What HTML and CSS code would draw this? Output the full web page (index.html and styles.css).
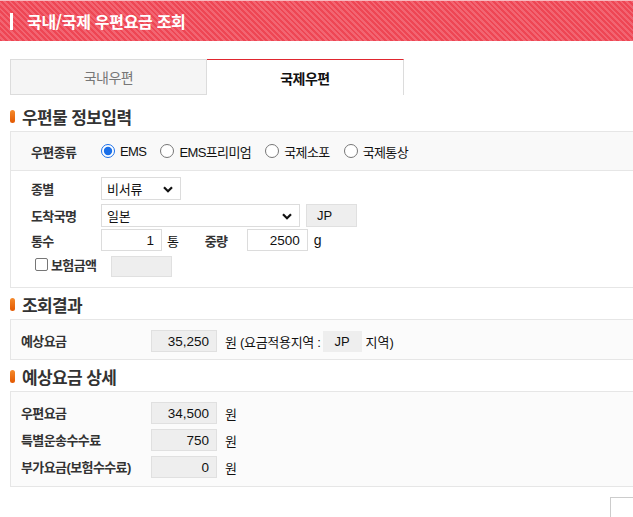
FILE: index.html
```html
<!DOCTYPE html>
<html lang="ko">
<head>
<meta charset="utf-8">
<title>국내/국제 우편요금 조회</title>
<link rel="stylesheet" href="styles.css">
</head>
<body>
<header class="page-header">
  <span class="bar"></span>
  <h1 class="page-title">국내/국제 우편요금 조회</h1>
</header>
<main class="content">
  <div class="tabs">
    <div class="tab">국내우편</div>
    <div class="tab active">국제우편</div>
  </div>

  <h2 class="sec-title first">우편물 정보입력</h2>
  <div class="box box-form">
    <div class="type-row">
      <span class="lbl type-lbl">우편종류</span>
      <label class="radio"><input type="radio" name="t" checked>EMS</label>
      <label class="radio"><input type="radio" name="t">EMS프리미엄</label>
      <label class="radio"><input type="radio" name="t">국제소포</label>
      <label class="radio"><input type="radio" name="t">국제통상</label>
    </div>
    <div class="fields">
      <div class="frow r1">
        <span class="lbl flbl">종별</span>
        <div class="sel sel-sm">
          <span class="sel-text">비서류</span>
          <svg class="chev" width="10" height="7" viewBox="0 0 10 7"><path d="M1 1.2 L5 5.2 L9 1.2" fill="none" stroke="#111" stroke-width="2.2"/></svg>
        </div>
      </div>
      <div class="frow r2">
        <span class="lbl flbl">도착국명</span>
        <div class="sel sel-lg">
          <span class="sel-text">일본</span>
          <svg class="chev" width="10" height="7" viewBox="0 0 10 7"><path d="M1 1.2 L5 5.2 L9 1.2" fill="none" stroke="#111" stroke-width="2.2"/></svg>
        </div>
        <span class="code-box">JP</span>
      </div>
      <div class="frow r3">
        <span class="lbl flbl">통수</span>
        <span class="inp inp-num">1</span>
        <span class="unit">통</span>
        <span class="lbl wlbl">중량</span>
        <span class="inp inp-num">2500</span>
        <span class="unit unit-g">g</span>
      </div>
      <div class="frow r4">
        <label class="chk"><span class="chkbox"></span><span class="lbl">보험금액</span></label>
        <span class="inp inp-dis"></span>
      </div>
    </div>
  </div>

  <h2 class="sec-title">조회결과</h2>
  <div class="box box-res">
    <div class="rrow">
      <span class="lbl rlbl">예상요금</span>
      <span class="inp inp-ro">35,250</span>
      <span class="unit">원 (요금적용지역 :</span>
      <span class="zone">JP</span>
      <span class="unit2">지역)</span>
    </div>
  </div>

  <h2 class="sec-title">예상요금 상세</h2>
  <div class="box box-res box-detail">
    <div class="rrow">
      <span class="lbl rlbl">우편요금</span>
      <span class="inp inp-ro">34,500</span>
      <span class="unit">원</span>
    </div>
    <div class="rrow">
      <span class="lbl rlbl">특별운송수수료</span>
      <span class="inp inp-ro">750</span>
      <span class="unit">원</span>
    </div>
    <div class="rrow">
      <span class="lbl rlbl">부가요금(보험수수료)</span>
      <span class="inp inp-ro">0</span>
      <span class="unit">원</span>
    </div>
  </div>
</main>
<div class="corner-btn"></div>
</body>
</html>
```
FILE: styles.css
```css
html, body {
  margin: 0;
  padding: 0;
  background: #fff;
  overflow: hidden;
}
body {
  width: 633px;
  height: 517px;
  position: relative;
  font-family: "Liberation Sans", "Noto Sans CJK KR", sans-serif;
  font-size: 13px;
  color: #222;
}
.page-header {
  height: 40px;
  border-top: 1px solid #f7b9bf;
  background: repeating-linear-gradient(45deg, #ee4654 0 2px, #f26572 2px 4px);
  display: flex;
  align-items: center;
}
.bar {
  width: 3px;
  height: 17px;
  background: #fff;
  margin-left: 10px;
  margin-right: 14px;
}
.page-title {
  margin: 0;
  font-size: 16px;
  font-weight: bold;
  color: #fff;
  letter-spacing: -0.3px;
  font-family: "Noto Sans CJK KR", sans-serif;
}
.content {
  width: 700px;
  padding-left: 10px;
}
.tabs {
  display: flex;
  margin-top: 18px;
  height: 36px;
}
.tab {
  width: 197px;
  box-sizing: border-box;
  display: flex;
  align-items: center;
  justify-content: center;
  font-family: "Noto Sans CJK KR", sans-serif;
  font-size: 14px;
  letter-spacing: -0.5px;
}
.tab:first-child {
  background: #f5f5f5;
  border: 1px solid #dcdcdc;
  color: #777;
}
.tab.active {
  background: #fff;
  border-top: 1px solid #e0262f;
  border-right: 1px solid #dcdcdc;
  color: #111;
  font-weight: bold;
}
.sec-title {
  margin: 4px 0 3px;
  height: 24px;
  display: flex;
  align-items: center;
  font-size: 17px;
  font-weight: bold;
  color: #333;
  font-family: "Noto Sans CJK KR", sans-serif;
  letter-spacing: -0.6px;
}
.sec-title.first {
  margin-top: 9px;
}
.sec-title::before {
  content: "";
  width: 5px;
  height: 13px;
  border-radius: 3px;
  background: linear-gradient(#f58a2c, #e35800);
  margin-right: 7px;
  margin-top: 1px;
}
.box {
  border: 1px solid #e6e6e6;
  box-sizing: border-box;
}
.lbl {
  font-weight: bold;
  color: #333;
  letter-spacing: -0.6px;
}
.box-form .type-row {
  height: 38px;
  background: #f9f9f9;
  border-bottom: 1px solid #e6e6e6;
  display: flex;
  align-items: center;
  padding-left: 20px;
}
.type-lbl {
  width: 70px;
}
.radio {
  display: flex;
  align-items: center;
  margin-right: 14px;
  color: #111;
  letter-spacing: -0.6px;
  font-size: 13px;
}
.radio input {
  margin: 0 5px 0 0;
  width: 14px;
  height: 14px;
  accent-color: #1a6fe8;
}
.fields {
  padding: 6px 0 10px 20px;
}
.frow {
  display: flex;
  align-items: center;
}
.r1 { height: 23px; }
.r2 { height: 23px; margin-top: 4px; }
.r3 { height: 22px; margin-top: 2px; }
.r4 { height: 22px; margin-top: 4px; }
.flbl {
  width: 70px;
}
.sel {
  position: relative;
  height: 23px;
  box-sizing: border-box;
  border: 1px solid #dcdcdc;
  background: #fff;
  display: flex;
  align-items: center;
  padding-left: 5px;
}
.sel-text {
  color: #111;
  letter-spacing: -0.2px;
}
.sel-sm { width: 80px; }
.sel-lg { width: 199px; }
.chev {
  position: absolute;
  right: 7px;
  top: 8px;
}
.code-box {
  margin-left: 6px;
  width: 51px;
  height: 23px;
  box-sizing: border-box;
  background: #eee;
  border: 1px solid #e0e0e0;
  padding-left: 10px;
  display: flex;
  align-items: center;
  color: #111;
}
.inp {
  height: 22px;
  box-sizing: border-box;
  border: 1px solid #dcdcdc;
  background: #fff;
  display: flex;
  align-items: center;
  justify-content: flex-end;
  padding-right: 7px;
  color: #111;
  font-size: 13.5px;
}
.inp-num { width: 61px; }
.unit {
  margin-left: 5px;
  color: #111;
  letter-spacing: -0.3px;
}
.unit-g {
  margin-left: 6px;
  font-size: 14px;
}
.wlbl {
  margin-left: 26px;
  width: 42px;
}
.chk {
  display: flex;
  align-items: center;
  margin-left: 4px;
  width: 76px;
  align-self: flex-start;
  height: 16px;
  margin-top: 1px;
}
.chkbox {
  width: 13px;
  height: 13px;
  box-sizing: border-box;
  border: 1px solid #767676;
  border-radius: 2px;
  margin-right: 3px;
  background: #fff;
}
.inp-dis {
  width: 61px;
  height: 21px;
  background: #eee;
  border-color: #e0e0e0;
}
.box-res {
  background: #fbfbfb;
  padding: 10px 0 7px 10px;
}
.rrow {
  display: flex;
  align-items: center;
  height: 22px;
}
.box-detail {
  padding-top: 10px;
  padding-bottom: 8px;
}
.box-detail .rrow + .rrow {
  margin-top: 5px;
}
.rlbl {
  width: 130px;
  align-self: flex-start;
  padding-top: 1px;
}
.inp-ro {
  width: 66px;
  background: #eee;
  border-color: #e0e0e0;
}
.box-res .unit {
  margin-left: 8px;
}
.zone {
  margin-left: 2px;
  width: 39px;
  height: 21px;
  background: #eee;
  display: flex;
  align-items: center;
  justify-content: center;
  color: #111;
}
.unit2 {
  margin-left: 4px;
  color: #111;
}
.corner-btn {
  position: absolute;
  left: 610px;
  top: 497px;
  width: 40px;
  height: 40px;
  border: 1px solid #ccc;
  background: #fff;
}
```
